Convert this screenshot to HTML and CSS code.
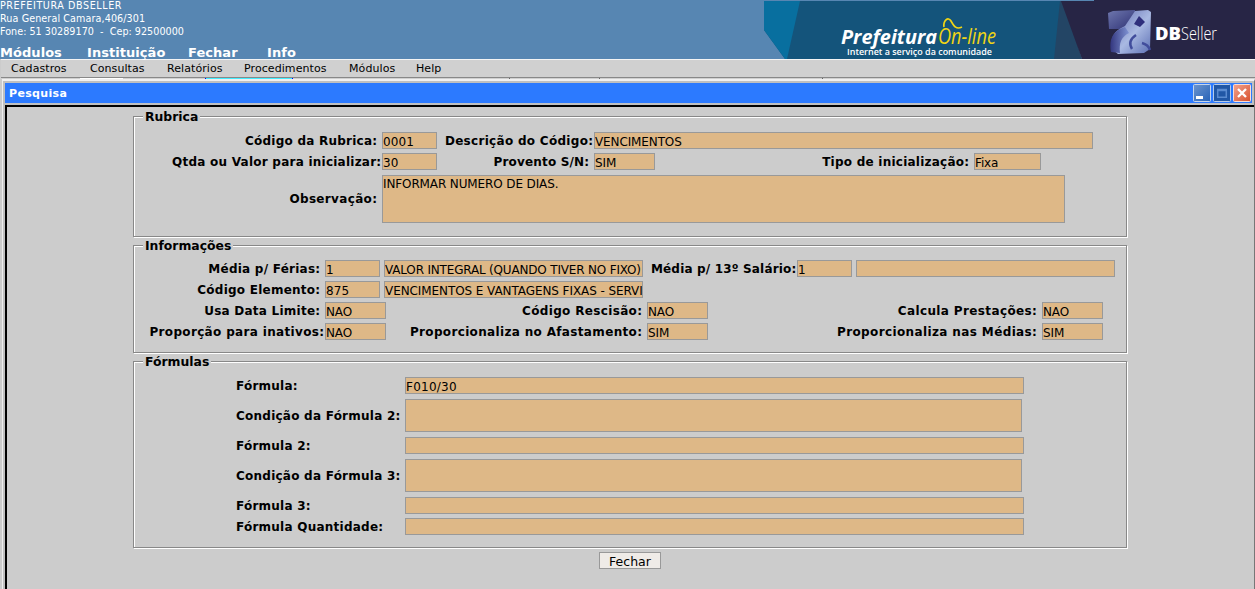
FILE: index.html
```html
<!DOCTYPE html>
<html lang="pt-BR">
<head>
<meta charset="utf-8">
<title>Pesquisa</title>
<link rel="stylesheet" href="styles.css">
</head>
<body>
<header class="top">
  <div class="org">
    <div class="org-name">PREFEITURA DBSELLER</div>
    <div class="org-street">Rua General Camara,406/301</div>
    <div>Fone: 51 30289170 &nbsp;-&nbsp; Cep: 92500000</div>
    <nav class="main-nav"><span class="n1">Módulos</span><span class="n2">Instituição</span><span class="n3">Fechar</span><span class="n4">Info</span></nav>
  </div>
  <svg class="banner" width="491" height="59" viewBox="0 0 491 59">
    <defs>
      <linearGradient id="cube" x1="0" y1="0" x2="1" y2="1"><stop offset="0" stop-color="#5a64ad"/><stop offset=".55" stop-color="#a9b9e2"/><stop offset="1" stop-color="#5c6fb4"/></linearGradient>
      <linearGradient id="side" x1="0" y1="0" x2="1" y2="1"><stop offset="0" stop-color="#6f78ae"/><stop offset="1" stop-color="#2d3074"/></linearGradient>
      <linearGradient id="leg" x1="0" y1="0" x2="1" y2="0"><stop offset="0" stop-color="#34377f"/><stop offset="1" stop-color="#7f93d3"/></linearGradient>
    </defs>
    <path fill="#14547b" d="M0 1h300v58H21L0 30z"/>
    <path fill="#086f9f" d="M0 1h36L23 59h-2L0 30z"/>
    <path fill="#234565" d="M296 1h4l18 58h-28z"/>
    <path fill="#272545" d="M297 1h33V0h161v59H318z"/>
    <text class="logo-bold" x="77" y="44" textLength="96" lengthAdjust="spacingAndGlyphs">Prefeitura</text>
    <text class="logo-line" x="174" y="44" textLength="58" lengthAdjust="spacingAndGlyphs">On-line</text>
    <path fill="none" stroke="#f0d515" stroke-width="1.7" d="M180 27c-1-6 4-11 7-6s5 9 11 6"/>
    <text class="logo-sub" x="83" y="55" textLength="145" lengthAdjust="spacingAndGlyphs">Internet a serviço da comunidade</text>
    <path fill="url(#side)" d="M344 13l5-2 22-1 1 13-7 6-20 0z"/>
    <path fill="url(#cube)" d="M371 11l13-1 3 2-1 37-6 4-26 1-6-5c-2-12 2-18 13-23z"/>
    <path fill="url(#leg)" d="M361 27c-13 4-16 13-14 25l9 1c-1-10 1-16 9-20z"/>
    <path fill="#2f2f7c" d="M375 16l6 6-5 5-6-3z"/>
    <path fill="none" stroke="#414d9c" stroke-width="2.500" d="M368 49c-3-5-2-10 4-14M378 43c4 1 7 4 8 7"/>
    <text class="logo-db" x="391" y="40" textLength="26" lengthAdjust="spacingAndGlyphs">DB</text>
    <text class="logo-seller" x="417" y="40" textLength="36" lengthAdjust="spacingAndGlyphs">Seller</text>
  </svg>
</header>
<nav class="menubar"><span class="m1">Cadastros</span><span class="m2">Consultas</span><span class="m3">Relatórios</span><span class="m4">Procedimentos</span><span class="m5">Módulos</span><span class="m6">Help</span></nav>
<div class="strip"><i class="s1"></i><i class="s2"></i><i class="s3"></i><i class="s4"></i><i class="s5"></i></div>
<main class="window">
  <div class="titlebar">
    <span class="title">Pesquisa</span>
    <svg width="59" height="18" viewBox="0 0 59 18">
      <defs>
        <linearGradient id="blue" x2="1" y2="1"><stop stop-color="#6d95cd"/><stop offset="1" stop-color="#2562b8"/></linearGradient>
        <linearGradient id="red" x2="1" y2="1"><stop stop-color="#f2a48f"/><stop offset="1" stop-color="#d9502c"/></linearGradient>
      </defs>
      <rect x=".5" y=".5" width="17" height="17" rx="1" fill="url(#blue)" stroke="#c5d5eb"/>
      <path fill="#fff" d="M3 12h7v3H3z"/>
      <rect x="20.500" y=".5" width="17" height="17" rx="1" fill="#2157a5" stroke="#b5cbe9"/>
      <path fill="none" stroke="#5a8bd0" stroke-width="1.500" d="M24.700 5.700h8.600v7.600h-8.600z"/><path stroke="#5a8bd0" stroke-width="2.500" d="M24 6h10"/>
      <rect x="40.500" y=".5" width="17" height="17" rx="1" fill="url(#red)" stroke="#f8ded8"/>
      <path stroke="#fff" stroke-width="2.300" d="M45 5l8 8M53 5l-8 8"/>
    </svg>
  </div>
  <div class="content">
    <section class="group rubrica">
      <h2>Rubrica</h2>
      <div class="row"><label class="to-code">Código da Rubrica:</label><output class="field w55">0001</output><label class="to-desc">Descrição do Código:</label><output class="field w499">VENCIMENTOS</output></div>
      <div class="row"><label class="to-code tight">Qtda ou Valor para inicializar:</label><output class="field w55">30</output><label class="to-provento">Provento S/N:</label><output class="field w61">SIM</output><label class="to-tipo">Tipo de inicialização:</label><output class="field w67">Fixa</output></div>
      <div class="row obs"><label class="to-code wide">Observação:</label><output class="field w683">INFORMAR NUMERO DE DIAS.</output></div>
    </section>
    <section class="group info">
      <h2>Informações</h2>
      <div class="row"><label class="to-info">Média p/ Férias:</label><output class="field w55">1</output><output class="field w259 next">VALOR INTEGRAL (QUANDO TIVER NO FIXO)</output><label class="to-salario tight">Média p/ 13º Salário:</label><output class="field w55">1</output><output class="field w259 next"></output></div>
      <div class="row"><label class="to-info">Código Elemento:</label><output class="field w55">875</output><output class="field w259 next element">VENCIMENTOS E VANTAGENS FIXAS - SERVI</output></div>
      <div class="row"><label class="to-info">Usa Data Limite:</label><output class="field w61">NAO</output><label class="to-mid">Código Rescisão:</label><output class="field w61">NAO</output><label class="to-right">Calcula Prestações:</label><output class="field w61">NAO</output></div>
      <div class="row"><label class="to-info tight wide">Proporção para inativos:</label><output class="field w61">NAO</output><label class="to-mid">Proporcionaliza no Afastamento:</label><output class="field w61">SIM</output><label class="to-right">Proporcionaliza nas Médias:</label><output class="field w61">SIM</output></div>
    </section>
    <section class="group formulas">
      <h2>Fórmulas</h2>
      <div class="row"><label>Fórmula:</label><output class="field w619 digits">F010/30</output></div>
      <div class="row area"><label>Condição da Fórmula 2:</label><output class="field w617"></output></div>
      <div class="row"><label>Fórmula 2:</label><output class="field w619"></output></div>
      <div class="row area"><label>Condição da Fórmula 3:</label><output class="field w617"></output></div>
      <div class="row"><label>Fórmula 3:</label><output class="field w619"></output></div>
      <div class="row"><label>Fórmula Quantidade:</label><output class="field w619"></output></div>
    </section>
    <button class="close">Fechar</button>
  </div>
</main>
</body>
</html>
```
FILE: styles.css
```css
* { box-sizing: border-box; }
body { margin: 0; width: 1255px; height: 589px; overflow: hidden; background: #ccc; color: #000; font-family: "DejaVu Sans", sans-serif; font-size: 12px; white-space: nowrap; }
.top { display: flex; justify-content: space-between; height: 59px; background: #5786b2; color: #fff; }
.org { font-size: 9.6px; line-height: 13px; margin-top: -1px; letter-spacing: .03px; }
.org-name { letter-spacing: .58px; }
.org-street { letter-spacing: .1px; }
.main-nav { display: flex; font-weight: bold; font-size: 13px; line-height: 16px; margin-top: 7px; letter-spacing: .05px; }
.n1 { width: 87px; } .n2 { width: 101px; } .n3 { width: 79px; }
.banner { display: block; }
.banner text { font-family: "Open Sans", sans-serif; fill: #fff; }
.banner .logo-bold { font-size: 20px; font-weight: bold; font-style: italic; }
.banner .logo-line { font-size: 21px; font-style: italic; fill: #f0d515; }
.banner .logo-sub { font-size: 9.500px; font-weight: 600; }
.banner .logo-db { font-size: 17px; font-weight: 800; }
.banner .logo-seller { font-size: 18px; font-weight: 300; }
.menubar { display: flex; height: 19px; margin-left: 1px; padding-left: 10px; background: #d0d0d0; border-top: 1px solid #f4f4f4; border-bottom: 1px solid #888; font-size: 11px; line-height: 17px; letter-spacing: .08px; }
.m1 { width: 79px; } .m2 { width: 77px; } .m3 { width: 77px; } .m4 { width: 105px; } .m5 { width: 67px; }
.strip { display: flex; height: 1px; background: #d0d0d0; }
.s1 { margin-left: 80px; width: 43px; background: #fff; }
.s2 { margin-left: 82px; width: 88px; background: #4ef; border: solid #00f; border-width: 0 1px; }
.s3 { margin-left: 216px; width: 1px; background: #666; }
.s4 { margin-left: 89px; width: 1px; background: #666; }
.s5 { margin-left: 222px; width: 1px; background: #666; }
.window { height: 510px; margin-left: 2px; border-top: 2px solid #f0f0f0; border-left: 1px solid #eee; border-right: 1px solid #777; background: #c0c0c0; padding: 2px 0 0 2px; }
.titlebar { display: flex; align-items: center; justify-content: space-between; width: 1247px; height: 20px; padding: 0 0 0 4px; background: #2c7aff; }
.title { color: #fff; font-weight: bold; font-size: 11px; letter-spacing: .33px; }
.content { height: 486px; margin-top: 2px; border-top: 2px solid #000; border-left: 2px solid #000; background: #ccc; padding: 9px 0 0 126px; }
.group { width: 994px; border: 1px solid #888; box-shadow: 1px 1px 0 #fff, inset 1px 1px 0 #fff; }
.group h2 { display: block; width: fit-content; height: 15px; margin: -8px 0 0 9px; padding: 0 2px; background: #ccc; font-size: 12.400px; line-height: 16px; }
.rubrica { height: 121px; }
.info { height: 108px; margin-top: 8px; }
.formulas { height: 187px; margin-top: 8px; }
.row { display: flex; height: 17px; margin-bottom: 4px; }
.rubrica .row:nth-of-type(1) { margin-top: 8px; }
.info .row:nth-of-type(1) { margin-top: 7px; }
.formulas .row:nth-of-type(1) { margin-top: 8px; margin-bottom: 5px; }
.row.obs { height: 48px; margin-top: 5px; }
.row.area { height: 33px; margin-bottom: 5px; }
.formulas .row:nth-of-type(3) { margin-bottom: 5px; }
label { display: flex; align-items: center; justify-content: flex-end; padding-right: 4.700px; font-size: 12px; font-weight: bold; letter-spacing: .24px; }
label.tight { padding-right: .6px; }
label.wide { letter-spacing: .34px; }
.to-code { width: 248px; } .to-desc { width: 157px; padding-right: .7px; letter-spacing: .3px; } .to-provento { width: 157px; letter-spacing: .18px; } .to-tipo { width: 319px; }
.to-info { width: 191px; } .to-salario { width: 154px; letter-spacing: .17px; } .to-mid { width: 261px; letter-spacing: .34px; } .to-right { width: 334px; letter-spacing: .38px; }
.formulas label { width: 271px; padding: 0 0 0 102px; justify-content: flex-start; letter-spacing: .24px; }
.field { display: block; background: #deb887; border: 1px solid #999; overflow: hidden; line-height: 18px; font-size: 12px; letter-spacing: -.12px; }
.obs .field { line-height: 16px; }
.next { margin-left: 4px; letter-spacing: -.18px; }
.element { letter-spacing: -.08px; }
.digits { letter-spacing: .25px; }
.w55 { width: 55px; letter-spacing: .1px; } .w61 { width: 61px; } .w67 { width: 67px; } .w259 { width: 259px; } .w499 { width: 499px; } .w617 { width: 617px; } .w619 { width: 619px; } .w683 { width: 683px; }
.close { display: block; width: 62px; height: 17px; margin: 4px 0 0 466px; padding: 0; border: 1px solid #999; background: #efebe7; font: 12.500px/17px "DejaVu Sans", sans-serif; }
```
